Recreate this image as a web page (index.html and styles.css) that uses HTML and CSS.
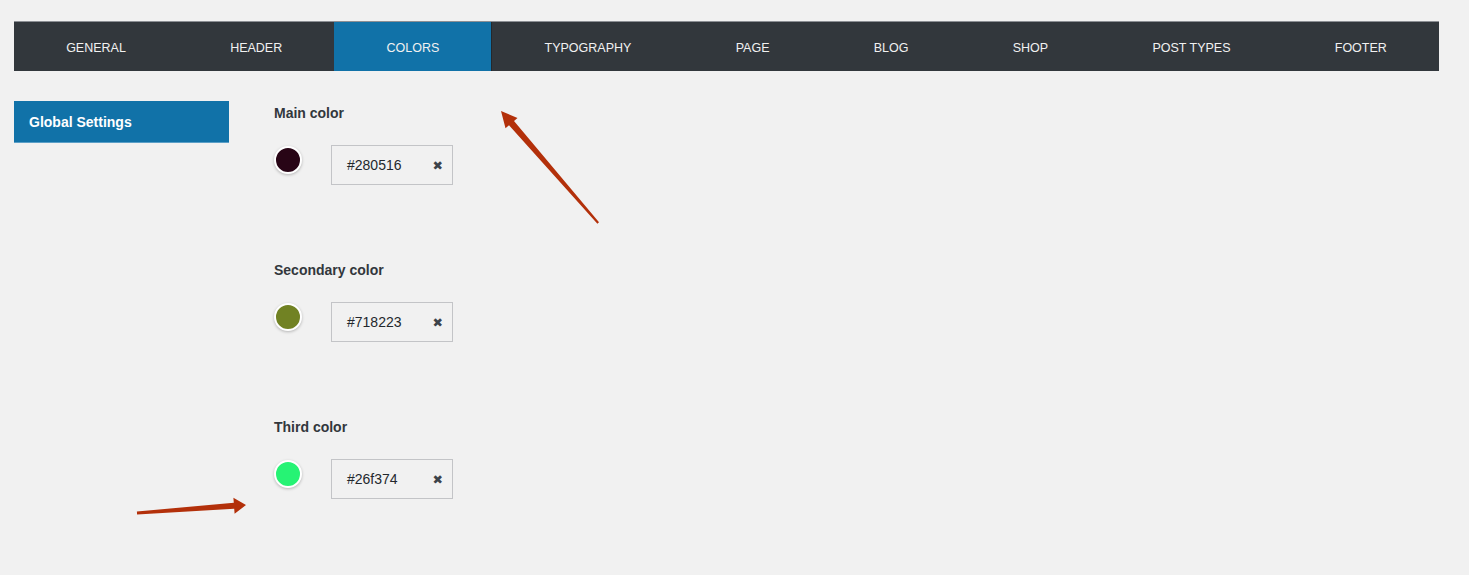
FILE: index.html
```html
<!DOCTYPE html>
<html>
<head>
<meta charset="utf-8">
<link rel="stylesheet" href="styles.css">
</head>
<body>
<nav class="tabs">
  <a class="tab">GENERAL</a>
  <a class="tab">HEADER</a>
  <a class="tab active">COLORS</a>
  <a class="tab">TYPOGRAPHY</a>
  <a class="tab">PAGE</a>
  <a class="tab">BLOG</a>
  <a class="tab">SHOP</a>
  <a class="tab">POST TYPES</a>
  <a class="tab">FOOTER</a>
</nav>
<div class="main">
  <aside class="sidebar">
    <div class="side-item">Global Settings</div>
  </aside>
  <section class="content">
    <div class="group">
      <div class="label">Main color</div>
      <div class="row">
        <span class="swatch" style="background:#280516"></span>
        <div class="field"><span class="value">#280516</span><span class="clear">✖</span></div>
      </div>
    </div>
    <div class="group">
      <div class="label">Secondary color</div>
      <div class="row">
        <span class="swatch" style="background:#718223"></span>
        <div class="field"><span class="value">#718223</span><span class="clear">✖</span></div>
      </div>
    </div>
    <div class="group">
      <div class="label">Third color</div>
      <div class="row">
        <span class="swatch" style="background:#26f374"></span>
        <div class="field"><span class="value">#26f374</span><span class="clear">✖</span></div>
      </div>
    </div>
  </section>
</div>
<svg class="arrows" width="1469" height="575" viewBox="0 0 1469 575">
  <polygon points="501,111 517.5,117.9 514,121 599,222.2 597.4,223.8 509,125.2 505.5,128.3"/>
  <polygon points="246,505 233.4,497.8 233.8,502.8 136.9,511.5 137.1,514.5 234.2,508.8 234.6,513.8"/>
</svg>
</body>
</html>
```
FILE: styles.css
```css
html, body {
  margin: 0;
  padding: 0;
  background: #f1f1f1;
  font-family: "Liberation Sans", Arial, sans-serif;
  color: #32373c;
}
body {
  position: relative;
  width: 1469px;
  height: 575px;
  overflow: hidden;
}
.tabs {
  display: flex;
  margin: 21px 0 0 14px;
  width: 1425px;
  height: 49px;
  background: #32373c;
  border-top: 1px solid #8c8f94;
}
.tab {
  flex: 1 1 auto;
  display: flex;
  align-items: center;
  justify-content: center;
  padding-top: 2px;
  color: #f1f1f1;
  font-size: 12.5px;
  white-space: nowrap;
}
.tab.active {
  background: #1172a8;
  border-right: 1px solid #23282d;
}
.main {
  display: flex;
  margin-top: 30px;
  padding-left: 14px;
}
.sidebar {
  width: 215px;
}
.side-item {
  height: 41px;
  line-height: 42px;
  background: #1172a8;
  border-bottom: 1px solid #5b9fc7;
  color: #fff;
  font-weight: bold;
  font-size: 14px;
  padding-left: 15px;
}
.content {
  margin-left: 45px;
  padding-top: 2px;
}
.group {
  margin-bottom: 75px;
}
.label {
  font-size: 14px;
  font-weight: bold;
  line-height: 20px;
  color: #32373c;
  margin-bottom: 22px;
}
.row {
  display: flex;
  align-items: flex-start;
}
.swatch {
  width: 24px;
  height: 24px;
  border-radius: 50%;
  border: 2px solid #fff;
  box-shadow: 0 1px 3px rgba(0,0,0,0.25);
  margin-top: 1px;
  margin-right: 29px;
}
.field {
  height: 38px;
  border: 1px solid #c3c4c7;
  display: flex;
  align-items: center;
  justify-content: space-between;
  padding: 0 9px 0 15px;
  box-sizing: content-box;
  width: 96px;
}
.value {
  font-size: 14px;
  color: #23282d;
}
.clear {
  font-size: 12.5px;
  color: #3c434a;
  font-family: "DejaVu Sans", sans-serif;
}
.arrows {
  position: absolute;
  left: 0;
  top: 0;
  pointer-events: none;
}
.arrows polygon {
  fill: #b3300a;
}
```
